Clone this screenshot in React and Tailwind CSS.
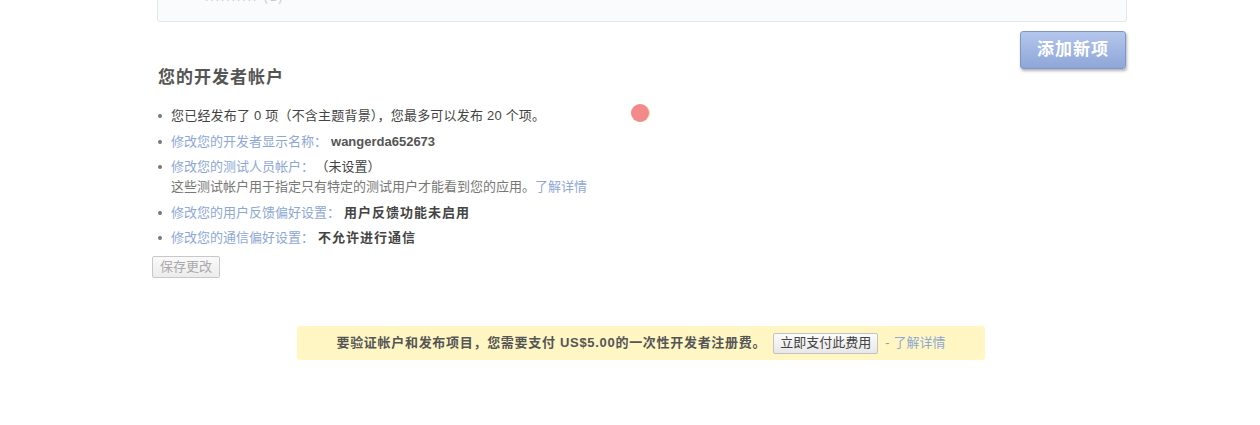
import React from "react";

const CJK = { fontFamily: '"Liberation Sans", Arial, "Noto Sans CJK SC", sans-serif' };

function Bullet() {
  return <span className="mt-[8px] mr-[9px] h-[4px] w-[4px] shrink-0 rounded-full bg-[#777]" />;
}

export default function App() {
  return (
    <div className="relative h-[425px] w-[1260px] overflow-hidden bg-white text-[13px] text-[#444]" style={CJK}>
      <div className="ml-[152px] w-[975px]">
        {/* top box */}
        <div className="ml-[5px] h-[22px] w-[970px] overflow-hidden rounded-b-[3px] border border-t-0 border-[#e3eaee] bg-[#f9fbfc]">
          <div className="ml-[47px] mt-[-11px] text-[12px] leading-[16px] tracking-[2px] text-[#c8ccd0]">.......... (1)</div>
        </div>

        {/* add button */}
        <div className="flex justify-end pt-[9px] pr-[1px]">
          <button className="h-[38px] w-[106px] rounded-[3px] border border-[#7f97c8] bg-gradient-to-b from-[#b4c6ec] to-[#8ea6d8] text-[17px] font-bold tracking-[1px] text-white shadow-[1px_2px_3px_rgba(0,0,0,0.3)]">
            添加新项
          </button>
        </div>

        <h2 className="ml-[6px] text-[17px] font-bold leading-[18px] tracking-[1px] text-[#555]">您的开发者帐户</h2>

        <ul className="ml-[6px] mt-[19px] flex flex-col gap-[5.5px] leading-[20px]">
          <li className="flex">
            <Bullet />
            <span className="tracking-[0.2px]">您已经发布了 0 项（不含主题背景），您最多可以发布 20 个项。</span>
          </li>
          <li className="flex">
            <Bullet />
            <span>
              <span className="text-[#8ea8d4]">修改您的开发者显示名称：</span>
              <span className="ml-[4px] font-bold text-[#555]">wangerda652673</span>
            </span>
          </li>
          <li className="flex">
            <Bullet />
            <div>
              <div>
                <span className="text-[#8ea8d4]">修改您的测试人员帐户：</span>
                <span className="ml-[8px]">（未设置）</span>
              </div>
              <div className="text-[#777]">
                这些测试帐户用于指定只有特定的测试用户才能看到您的应用。<span className="text-[#8ea8d4]">了解详情</span>
              </div>
            </div>
          </li>
          <li className="flex">
            <Bullet />
            <span>
              <span className="text-[#8ea8d4]">修改您的用户反馈偏好设置：</span>
              <span className="ml-[4px] font-bold tracking-[1px] text-[#444]">用户反馈功能未启用</span>
            </span>
          </li>
          <li className="flex">
            <Bullet />
            <span>
              <span className="text-[#8ea8d4]">修改您的通信偏好设置：</span>
              <span className="ml-[4px] font-bold tracking-[1px] text-[#444]">不允许进行通信</span>
            </span>
          </li>
        </ul>

        <button className="mt-[8px] h-[22px] w-[68px] rounded-[2px] border border-[#c8c8c8] bg-gradient-to-b from-[#fafafa] to-[#ececec] text-[13px] leading-[18px] text-[#aaa]">
          保存更改
        </button>

        {/* yellow bar */}
        <div className="ml-[145px] mt-[48px] flex h-[34px] w-[688px] items-center justify-center rounded-[3px] bg-[#fff6c4]">
          <span className="font-bold tracking-[0.7px] text-[#555]">要验证帐户和发布项目，您需要支付 US$5.00的一次性开发者注册费。</span>
          <button className="ml-[7px] h-[21px] rounded-[2px] border border-[#c2c2c2] bg-gradient-to-b from-[#fbfbfb] to-[#e8e8e8] px-[6px] text-[13px] leading-[18px] text-[#444]">
            立即支付此费用
          </button>
          <span className="ml-[7px] text-[#999]">-</span>
          <span className="ml-[4px] text-[#8ea8d4]">了解详情</span>
        </div>
      </div>

      {/* cursor dot */}
      <div className="absolute left-[631px] top-[104px] h-[18px] w-[18px] rounded-full bg-[#f38a8a] shadow-[1px_0_0_rgba(255,200,120,0.6)]" />
    </div>
  );
}
